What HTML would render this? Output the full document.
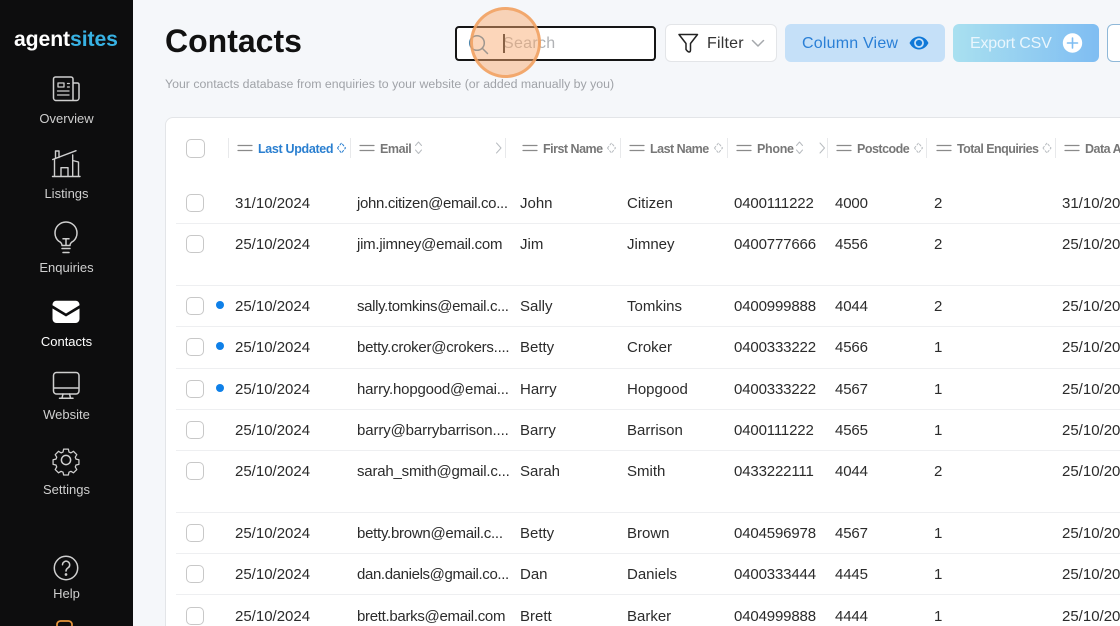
<!DOCTYPE html>
<html>
<head>
<meta charset="utf-8">
<style>
html,body{margin:0;padding:0;width:1120px;height:626px;overflow:hidden;background:#f5f7fa;font-family:"Liberation Sans",sans-serif}
body{position:relative}
.a{position:absolute;white-space:nowrap}
#side{position:absolute;left:0;top:0;width:133px;height:626px;background:#0d0d0e}
.nav{position:absolute;left:0;width:133px;text-align:center;font-size:13px;color:#cfcfcf;line-height:16px}
#clip{position:absolute;left:0;top:0;width:1120px;height:626px;overflow:hidden}
#card{position:absolute;left:165px;top:117px;width:1000px;height:560px;background:#fff;border:1px solid #e3e5e8;border-radius:8px;box-sizing:border-box}
.cb{position:absolute;left:186px;width:16px;height:16px;border:1px solid #c8c8c8;border-radius:5px;background:#fff}
.c{position:absolute;font-size:15px;line-height:18px;color:#2b2b2b;white-space:nowrap;margin-top:1px}
.p{letter-spacing:-.15px}
.h{position:absolute;top:140.500px;font-size:12.500px;line-height:16px;font-weight:bold;color:#777;white-space:nowrap;letter-spacing:-.5px}
.ln{position:absolute;left:176px;width:944px;height:1px;background:#eeeff1}
.vl{position:absolute;top:138px;width:1px;height:20px;background:#e8e9eb}
.dot{position:absolute;left:216px;width:8px;height:8px;border-radius:50%;background:#0f80e8}
.btn{position:absolute;top:24px;height:38px;box-sizing:border-box;border-radius:6px}
</style>
</head>
<body>
<div id="clip">
<div id="side"></div>
<div class="a" style="left:14px;top:28px;font-size:21.200px;line-height:24px;font-weight:bold;color:#fff;letter-spacing:-.1px">agent<span style="color:#38b2e4">sites</span></div>

<svg class="a" style="left:0;top:0" width="133" height="626" fill="none" stroke="#cfcfcf" stroke-width="1.500" stroke-linecap="round" stroke-linejoin="round">
<path d="M56 100.500a2.500 2.500 0 0 1-2.500-2.500V79a2 2 0 0 1 2-2h15.500a2 2 0 0 1 2 2v21.500zM73.500 83h4a1.500 1.500 0 0 1 1.500 1.500V98a2.500 2.500 0 0 1-2.500 2.500h-21"/>
<path d="M58 83h6v4h-6zM67.500 83.500h1.800M67.500 87h1.800M57.500 91h11.500M57.500 95h11.500" stroke-width="1.300"/>
<path d="M52.500 176.500h27.500M54.500 176.500V159M52.700 159.500l23.300-8.800M55.500 158.500V151h3.500v6.500M61 176.500V167.700h7v8.800M72.700 176.500V155M78.500 176.500V162l-5.800-1.500" stroke-width="1.400"/>
<path d="M62 245.500c0-2.500-1.500-3.500-3.500-4.500A11 11 0 1 1 73.500 241c-2 1-3.500 2-3.500 4.500z"/>
<path d="M63 238.700h6M66 238.700v6.500M62 248.500h8M63 252.500h6"/>
<path d="M52.500 304.500a3.800 3.800 0 0 1 3.800-3.800h19.400a3.800 3.800 0 0 1 3.800 3.800v.8L66 313.500l-13.500-8.200zM52.500 308.500V319a4 4 0 0 0 4 4h19a4 4 0 0 0 4-4v-10.500L66 316.500z" fill="#fff" stroke="none"/>
<rect x="53.500" y="372.500" width="25.500" height="21.500" rx="3"/>
<path d="M54 388h24.500M63 394l-1 4M69.500 394l1 4M59.500 398.200h13.500"/>
<path d="M63.200 447.200h5.600l.7 3.400 2.300 1 3-1.800 3.900 3.900-1.800 3 .9 2.300 3.400.7v5.500l-3.400.7-.9 2.300 1.800 3-3.900 3.900-3-1.800-2.300 1-.7 3.400h-5.600l-.7-3.400-2.300-1-3 1.800-3.900-3.900 1.800-3-.9-2.300-3.400-.7v-5.500l3.400-.7.9-2.300-1.800-3 3.900-3.900 3 1.800 2.300-1z" transform="translate(66 460) scale(.85) translate(-66 -460)"/>
<circle cx="66" cy="460" r="4.600"/>
<circle cx="66" cy="568" r="11.700"/>
<path d="M62.500 564.800a3.600 3.600 0 1 1 5.600 3c-1.300.9-2.100 1.500-2.100 3.200"/>
<circle cx="66" cy="574.500" r=".6" fill="#cfcfcf"/>
<rect x="57" y="621" width="15" height="14" rx="3.500" stroke="#e8963c" stroke-width="1.700"/>
</svg>

<div class="nav" style="top:111px">Overview</div>
<div class="nav" style="top:186px">Listings</div>
<div class="nav" style="top:260px">Enquiries</div>
<div class="nav" style="top:334px;color:#fff">Contacts</div>
<div class="nav" style="top:407px">Website</div>
<div class="nav" style="top:482px">Settings</div>
<div class="nav" style="top:586px">Help</div>

<div class="a" style="left:165px;top:22px;font-size:32px;line-height:38px;font-weight:bold;color:#111">Contacts</div>
<div class="a" style="left:165px;top:76px;font-size:12.330px;line-height:16px;color:#a0a3a8">Your contacts database from enquiries to your website (or added manually by you)</div>

<div class="a" style="left:455px;top:26px;width:201px;height:35px;box-sizing:border-box;border:2px solid #151515;border-radius:4px;background:#fff"></div>
<div class="a" style="left:503px;top:34px;font-size:16px;line-height:20px;color:#b0b2b5;letter-spacing:.3px">Search</div>
<div class="a" style="left:503px;top:34px;width:1.500px;height:19px;background:#222"></div>

<div class="btn" style="left:665px;width:112px;background:#fff;border:1px solid #e3e5e8"></div>
<div class="a" style="left:707px;top:34px;font-size:16px;line-height:20px;color:#333;letter-spacing:.2px">Filter</div>
<div class="btn" style="left:785px;width:160px;background:#c5e0f8"></div>
<div class="a" style="left:802px;top:34px;font-size:16px;line-height:20px;color:#2a7fd6;letter-spacing:.2px">Column View</div>
<div class="btn" style="left:953px;width:146px;background:linear-gradient(90deg,#a9e0f0,#7fbdf2)"></div>
<div class="a" style="left:970px;top:34px;font-size:16px;line-height:20px;color:#eaf6fd;letter-spacing:-.2px">Export CSV</div>
<div class="btn" style="left:1107px;width:40px;background:#fff;border:1px solid #8fb8d8"></div>

<svg class="a" style="left:0;top:0" width="1120" height="70" fill="none" stroke-linecap="round" stroke-linejoin="round">
<circle cx="477" cy="43" r="7.300" stroke="#4d86ad" stroke-width="1.500"/>
<path d="M482.500 48.500l5 5" stroke="#4d86ad" stroke-width="1.500"/>
<path d="M679 34.500h18.500l-7 9v6.500c0 1.500-.5 2-1.500 2-.7 0-1-.3-1.500-.8l-1.500-1.700v-6z" stroke="#222" stroke-width="1.500"/>
<path d="M752.500 40.500l5.500 5.500 5.500-5.500" stroke="#a5a8ac" stroke-width="1.500"/>
<path d="M909.500 43c2-4 5.500-6.500 9.500-6.500s7.500 2.500 9.500 6.500c-2 4-5.500 6.500-9.500 6.500s-7.500-2.500-9.500-6.500z" fill="#0f78d8"/>
<circle cx="919" cy="43" r="4" fill="#0f78d8" stroke="#c5e0f8" stroke-width="1.800"/>
<circle cx="1072.500" cy="43" r="9.700" fill="#fff"/>
<path d="M1072.500 38v10M1067.500 43h10" stroke="#7fbdf2" stroke-width="1.600"/>
</svg>

<div class="a" style="left:470px;top:7px;width:71px;height:71px;box-sizing:border-box;border-radius:50%;background:rgba(249,170,110,.48);border:3px solid rgba(240,160,95,.85)"></div>

<div id="card"></div>

<div class="cb" style="top:138.500px;width:17px;height:17px;left:185.500px"></div>
<div class="vl" style="left:228px"></div><div class="vl" style="left:350px"></div><div class="vl" style="left:505px"></div><div class="vl" style="left:620px"></div><div class="vl" style="left:727px"></div><div class="vl" style="left:827px"></div><div class="vl" style="left:926px"></div><div class="vl" style="left:1055px"></div>

<div class="h" style="left:258px;color:#2a7fd0;letter-spacing:-.33px">Last Updated</div>
<div class="h" style="left:380px;letter-spacing:-.4px">Email</div>
<div class="h" style="left:543px">First Name</div>
<div class="h" style="left:650px">Last Name</div>
<div class="h" style="left:757px;letter-spacing:-.3px">Phone</div>
<div class="h" style="left:857px">Postcode</div>
<div class="h" style="left:957px;letter-spacing:-.53px">Total Enquiries</div>
<div class="h" style="left:1085px">Data A</div>

<svg class="a" style="left:0;top:130px" width="1120" height="36" fill="none" stroke="#8a8a8a" stroke-width="1.200" stroke-linecap="round" stroke-linejoin="round">
<path d="M238 15.500h14M238 20.500h14M360 15.500h14M360 20.500h14M523 15.500h14M523 20.500h14M630 15.500h14M630 20.500h14M737 15.500h14M737 20.500h14M837 15.500h14M837 20.500h14M937 15.500h14M937 20.500h14M1065 15.500h14M1065 20.500h14"/>
<g stroke="#b8bcc0" stroke-width="1">
<path d="M415.500 15.500l3-3.500 3 3.500M415.500 20l3 3.500 3-3.500M796.500 15.500l3-3.500 3 3.500M796.500 20l3 3.500 3-3.500"/>
<path d="M496.500 13l4.500 5-4.500 5M820 13l4.500 5-4.500 5"/>
<path stroke-dasharray="2 2" d="M607.500 18l4-5 4 5-4 5zM714.500 18l4-5 4 5-4 5zM914.500 18l4-5 4 5-4 5zM1043 18l4-5 4 5-4 5z"/>
</g>
<path stroke="#2a7fd0" stroke-width="1" stroke-dasharray="2 2" d="M337.500 18l4-5 4 5-4 5z"/>
</svg>

<div class="ln" style="top:223px"></div><div class="ln" style="top:285px"></div><div class="ln" style="top:326px"></div><div class="ln" style="top:368px"></div><div class="ln" style="top:409px"></div><div class="ln" style="top:450px"></div><div class="ln" style="top:512px"></div><div class="ln" style="top:553px"></div><div class="ln" style="top:594px"></div>

<div class="dot" style="top:301px"></div><div class="dot" style="top:342px"></div><div class="dot" style="top:384px"></div>

<div class="cb" style="top:194px"></div><div class="c" style="left:235px;top:194px">31/10/2024</div><div class="c" style="left:357px;top:194px;letter-spacing:-.33px">john.citizen@email.co...</div><div class="c" style="left:520px;top:194px">John</div><div class="c" style="left:627px;top:194px">Citizen</div><div class="c p" style="left:734px;top:194px">0400111222</div><div class="c p" style="left:835px;top:194px">4000</div><div class="c" style="left:934px;top:194px">2</div><div class="c" style="left:1062px;top:194px">31/10/2024</div>
<div class="cb" style="top:235px"></div><div class="c" style="left:235px;top:235px">25/10/2024</div><div class="c" style="left:357px;top:235px;letter-spacing:-.25px">jim.jimney@email.com</div><div class="c" style="left:520px;top:235px">Jim</div><div class="c" style="left:627px;top:235px">Jimney</div><div class="c p" style="left:734px;top:235px">0400777666</div><div class="c p" style="left:835px;top:235px">4556</div><div class="c" style="left:934px;top:235px">2</div><div class="c" style="left:1062px;top:235px">25/10/2024</div>
<div class="cb" style="top:297px"></div><div class="c" style="left:235px;top:297px">25/10/2024</div><div class="c" style="left:357px;top:297px;letter-spacing:-.35px">sally.tomkins@email.c...</div><div class="c" style="left:520px;top:297px">Sally</div><div class="c" style="left:627px;top:297px">Tomkins</div><div class="c p" style="left:734px;top:297px">0400999888</div><div class="c p" style="left:835px;top:297px">4044</div><div class="c" style="left:934px;top:297px">2</div><div class="c" style="left:1062px;top:297px">25/10/2024</div>
<div class="cb" style="top:338px"></div><div class="c" style="left:235px;top:338px">25/10/2024</div><div class="c" style="left:357px;top:338px;letter-spacing:-.25px">betty.croker@crokers....</div><div class="c" style="left:520px;top:338px">Betty</div><div class="c" style="left:627px;top:338px">Croker</div><div class="c p" style="left:734px;top:338px">0400333222</div><div class="c p" style="left:835px;top:338px">4566</div><div class="c" style="left:934px;top:338px">1</div><div class="c" style="left:1062px;top:338px">25/10/2024</div>
<div class="cb" style="top:380px"></div><div class="c" style="left:235px;top:380px">25/10/2024</div><div class="c" style="left:357px;top:380px;letter-spacing:-.2px">harry.hopgood@emai...</div><div class="c" style="left:520px;top:380px">Harry</div><div class="c" style="left:627px;top:380px">Hopgood</div><div class="c p" style="left:734px;top:380px">0400333222</div><div class="c p" style="left:835px;top:380px">4567</div><div class="c" style="left:934px;top:380px">1</div><div class="c" style="left:1062px;top:380px">25/10/2024</div>
<div class="cb" style="top:421px"></div><div class="c" style="left:235px;top:421px">25/10/2024</div><div class="c" style="left:357px;top:421px;letter-spacing:-.12px">barry@barrybarrison....</div><div class="c" style="left:520px;top:421px">Barry</div><div class="c" style="left:627px;top:421px">Barrison</div><div class="c p" style="left:734px;top:421px">0400111222</div><div class="c p" style="left:835px;top:421px">4565</div><div class="c" style="left:934px;top:421px">1</div><div class="c" style="left:1062px;top:421px">25/10/2024</div>
<div class="cb" style="top:462px"></div><div class="c" style="left:235px;top:462px">25/10/2024</div><div class="c" style="left:357px;top:462px;letter-spacing:-.2px">sarah_smith@gmail.c...</div><div class="c" style="left:520px;top:462px">Sarah</div><div class="c" style="left:627px;top:462px">Smith</div><div class="c p" style="left:734px;top:462px">0433222111</div><div class="c p" style="left:835px;top:462px">4044</div><div class="c" style="left:934px;top:462px">2</div><div class="c" style="left:1062px;top:462px">25/10/2024</div>
<div class="cb" style="top:524px"></div><div class="c" style="left:235px;top:524px">25/10/2024</div><div class="c" style="left:357px;top:524px;letter-spacing:-.27px">betty.brown@email.c...</div><div class="c" style="left:520px;top:524px">Betty</div><div class="c" style="left:627px;top:524px">Brown</div><div class="c p" style="left:734px;top:524px">0404596978</div><div class="c p" style="left:835px;top:524px">4567</div><div class="c" style="left:934px;top:524px">1</div><div class="c" style="left:1062px;top:524px">25/10/2024</div>
<div class="cb" style="top:565px"></div><div class="c" style="left:235px;top:565px">25/10/2024</div><div class="c" style="left:357px;top:565px;letter-spacing:-.37px">dan.daniels@gmail.co...</div><div class="c" style="left:520px;top:565px">Dan</div><div class="c" style="left:627px;top:565px">Daniels</div><div class="c p" style="left:734px;top:565px">0400333444</div><div class="c p" style="left:835px;top:565px">4445</div><div class="c" style="left:934px;top:565px">1</div><div class="c" style="left:1062px;top:565px">25/10/2024</div>
<div class="cb" style="top:607px"></div><div class="c" style="left:235px;top:607px">25/10/2024</div><div class="c" style="left:357px;top:607px;letter-spacing:-.3px">brett.barks@email.com</div><div class="c" style="left:520px;top:607px">Brett</div><div class="c" style="left:627px;top:607px">Barker</div><div class="c p" style="left:734px;top:607px">0404999888</div><div class="c p" style="left:835px;top:607px">4444</div><div class="c" style="left:934px;top:607px">1</div><div class="c" style="left:1062px;top:607px">25/10/2024</div>
</div>
</body>
</html>
